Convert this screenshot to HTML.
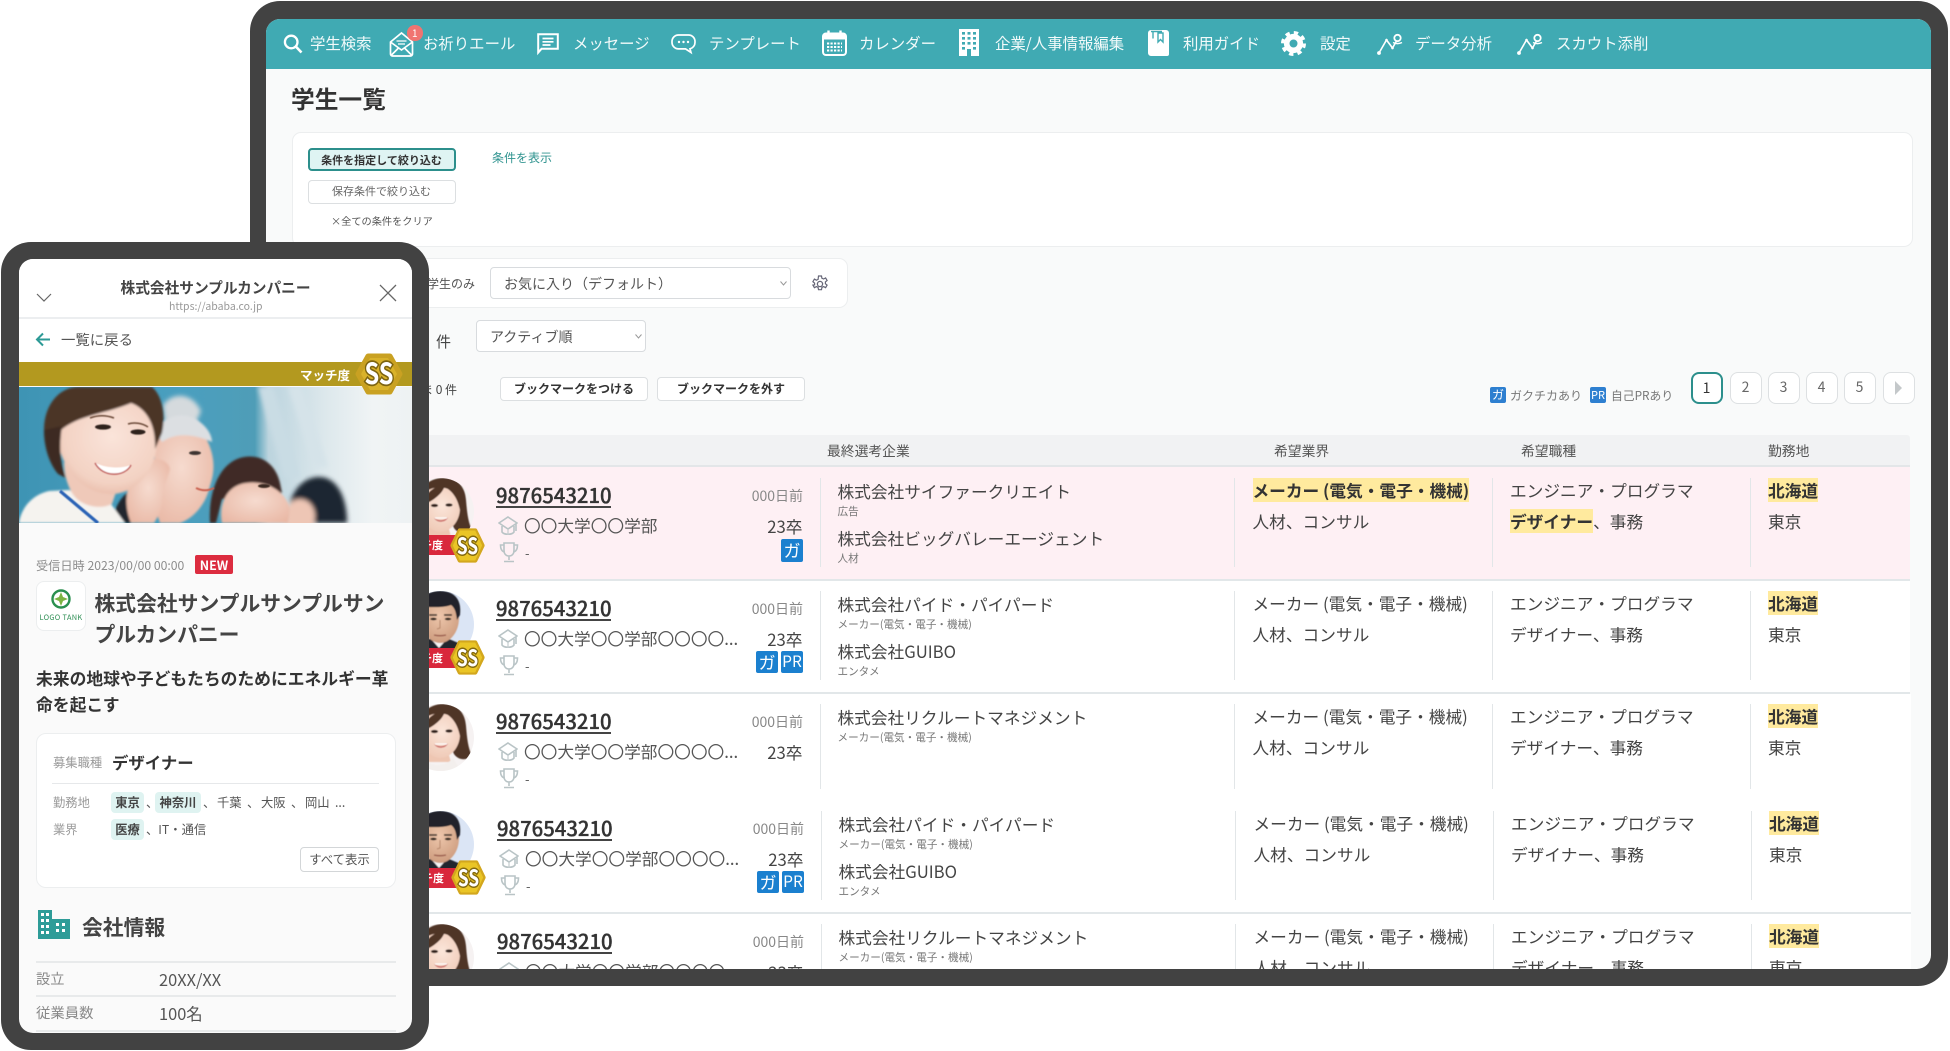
<!DOCTYPE html>
<html lang="ja">
<head>
<meta charset="utf-8">
<title>学生一覧</title>
<style>
*{box-sizing:border-box;margin:0;padding:0}
html,body{width:1950px;height:1051px;background:#fff;overflow:hidden}
body{position:relative;font-family:"Noto Sans CJK JP","Liberation Sans",sans-serif;color:#444}
.a{position:absolute}
.t{position:absolute;white-space:nowrap;line-height:20px;height:20px}
svg{position:absolute;overflow:visible}
.frame{position:absolute;left:250px;top:1px;width:1698px;height:985px;background:#424242;border-radius:30px}
.screen{position:absolute;left:0;top:0;width:1950px;height:1051px;background:#f9fafa;clip-path:inset(19px 19px 82px 266px round 14px)}
.nav{position:absolute;left:266px;top:19px;width:1665px;height:50px;background:#40aab3}
.n{position:absolute;top:33px;color:#f2fafa;font-size:15.4px;line-height:20px;white-space:nowrap;font-weight:400}
.card{position:absolute;background:#fff;border:1.5px solid #eceeef;border-radius:9px}
.btn{position:absolute;border-radius:4px;background:#fff;border:1.5px solid #dcdfe1;text-align:center;white-space:nowrap}
.sel{position:absolute;background:#fff;border:1.5px solid #d8dbde;border-radius:4px;font-size:14px;line-height:33px;padding-left:13px;color:#555;white-space:nowrap}
.pg{position:absolute;top:372px;width:32px;height:32px;border:1.5px solid #dde0e2;border-radius:8px;text-align:center;line-height:28px;font-size:14px;color:#666;background:#fff}
.bd{position:absolute;background:#1b80cf;color:#fff;border-radius:2px;text-align:center;overflow:hidden}
.r{position:absolute;left:0;width:1950px;height:0}
.num{position:absolute;left:496px;top:6px;font-size:20.3px;line-height:20px;color:#333;font-weight:500;-webkit-text-stroke:.35px #333;white-space:nowrap}
.ul{position:absolute;left:496px;top:28px;width:115px;height:1.5px;background:#444}
.days{position:absolute;left:740px;width:63px;top:7.5px;text-align:right;font-size:14px;line-height:20px;color:#888}
.sch{position:absolute;left:524px;top:37px;font-size:16.7px;line-height:20px;color:#555;white-space:nowrap}
.yr{position:absolute;left:749.5px;width:53px;top:37.5px;text-align:right;font-size:16.7px;line-height:20px;color:#444}
.dash{position:absolute;left:525px;top:65px;font-size:13px;line-height:20px;color:#555}
.v{position:absolute;top:0;width:1px;height:89px;background:#e2e6e8}
.co{position:absolute;left:837.5px;font-size:16.7px;line-height:20px;color:#444;white-space:nowrap}
.sub{position:absolute;left:837.5px;font-size:10.6px;line-height:14px;color:#777;white-space:nowrap}
.c1{position:absolute;left:1252.5px;font-size:16.7px;line-height:20px;white-space:nowrap;color:#444}
.c2{position:absolute;left:1510px;font-size:16.7px;line-height:20px;white-space:nowrap;color:#444}
.c3{position:absolute;left:1768px;font-size:16.7px;line-height:20px;white-space:nowrap;color:#444}
.l1{top:2px}.l2{top:33px}
.hl{background:#ffea9e;font-weight:700;color:#333}
.mt{position:absolute;left:410px;width:46px;top:57px;height:20px;background:#d9283c;color:#fff;font-size:11px;line-height:20px;font-weight:700;white-space:nowrap;overflow:hidden;text-indent:-11px}
.ss{position:absolute;left:450px;width:35px;height:35px}
.phone{position:absolute;left:1px;top:242px;width:428px;height:808px;background:#424242;border-radius:30px}
.pscreen{position:absolute;left:0;top:0;width:1950px;height:1051px;background:#fafafa;clip-path:inset(259px 1538px 18px 19px round 14px)}
.ph{font-size:12.3px;color:#9a9a9a}
.pv{font-size:12.3px;color:#555}
.pill{position:absolute;height:21px;background:#dff3f1;border-radius:4px;font-size:12.3px;font-weight:700;line-height:21px;text-align:center;color:#444}
.hr{position:absolute;left:36px;width:360px;height:1.5px;background:#e8eaeb}
</style>
</head>
<body>
<svg width="0" height="0" style="position:absolute">
<defs>
<filter id="av" x="-5%" y="-5%" width="110%" height="110%"><feGaussianBlur stdDeviation=".55"/></filter>
<radialGradient id="skw" cx=".55" cy=".4" r=".7"><stop offset="0" stop-color="#fbe6da"/><stop offset="1" stop-color="#eec6b2"/></radialGradient>
<radialGradient id="skm" cx=".5" cy=".4" r=".7"><stop offset="0" stop-color="#edc6ab"/><stop offset="1" stop-color="#c99678"/></radialGradient>
<symbol id="woman" viewBox="0 0 67 67">
<clipPath id="cw"><circle cx="33.5" cy="33.5" r="33.5"/></clipPath>
<g clip-path="url(#cw)">
<rect width="67" height="67" fill="#f6f2f2"/>
<g filter="url(#av)">
<path d="M12 28C10 8 24 0 36 0c14 0 22 8 23 22 1 12 2 22 6 30-6 5-14 4-18-2l-8-16z" fill="#4f3528"/>
<path d="M22 48l-2 10h24l-3-10z" fill="#eec6b2"/>
<path d="M10 67l8-12c4 4 6 6 12 6 6 0 12-2 16-7l8 13z" fill="#f3efed"/>
<path d="M14 26C14 12 26 8 38 10c10 2 15 10 15 20 0 14-10 24-20 24S14 42 14 26z" fill="url(#skw)"/>
<path d="M14 28C18 15 28 7 38 7c-2 8-10 15-24 21z" fill="#4f3528"/>
<path d="M36 8c8 4 14 10 17 24l4-8C55 12 46 6 36 8z" fill="#4f3528"/>
<ellipse cx="27.5" cy="27.5" rx="3.6" ry="1.6" fill="#33241d"/><ellipse cx="42" cy="27" rx="3.6" ry="1.6" fill="#33241d"/>
<path d="M27 40c4 3 10 3 14-.5-2 5-11 6-14 .5z" fill="#c9615e"/>
<path d="M28 40h12" stroke="#fff" stroke-width="1.2"/>
</g>
</g>
</symbol>
<symbol id="man" viewBox="0 0 67 67">
<clipPath id="cm"><circle cx="33.5" cy="33.5" r="33.5"/></clipPath>
<g clip-path="url(#cm)">
<rect width="67" height="67" fill="#dbe5f5"/>
<g filter="url(#av)">
<path d="M8 67V54l14-6h20l14 6v13z" fill="#23262f"/>
<path d="M24 48l8 9 8-9z" fill="#f5f5f5"/>
<path d="M13 26C13 12 22 7 33 7s19 6 19 20c0 14-9 25-19 25S13 40 13 26z" fill="url(#skm)"/>
<path d="M12 22C10 6 22 0 33 0c14 0 22 8 20 24l-3 5c-1-8-2-12-6-15-8 3-20 2-28 2-2 2-3 4-4 6z" fill="#23242b"/>
<path d="M22 24h8M37 24h8" stroke="#2a221c" stroke-width="1.6"/>
<ellipse cx="26.5" cy="28" rx="3.2" ry="1.3" fill="#231a14"/><ellipse cx="41" cy="28" rx="3.2" ry="1.3" fill="#231a14"/>
<path d="M33 29v8l-3 1" fill="none" stroke="#b5866a" stroke-width="1"/>
<path d="M27 44c4 1 8 1 12 0" fill="none" stroke="#9a5c4c" stroke-width="1.4"/>
</g>
</g>
</symbol>
<symbol id="hex" viewBox="0 0 48 42">
<polygon points="3,21 13,3 35,3 45,21 35,39 13,39" fill="#d3a71d" stroke="#d3a71d" stroke-width="5" stroke-linejoin="round"/>
<polygon points="5,21 14,4 34,4 43,21 34,38 14,38" fill="#eac526" stroke="#eac526" stroke-width="2" stroke-linejoin="round"/>
</symbol>
<symbol id="grad" viewBox="0 0 20 24">
<path d="M10 2l9 6-9 6-9-6z M4 11v6c2 3 10 3 12 0v-6M18 9v7" fill="none" stroke="#b9c4c6" stroke-width="1.6"/>
<path d="M10 14v6" stroke="#c5cdcf" stroke-width="1.2"/>
</symbol>
<symbol id="trophy" viewBox="0 0 20 22">
<path d="M5 2h10v7c0 4-2 6-5 6s-5-2-5-6z M5 4H1.5c0 4 1 6 3.5 7M15 4h3.5c0 4-1 6-3.5 7M10 15v4M5 20.5h10" fill="none" stroke="#b9c4c6" stroke-width="1.6"/>
</symbol>
<symbol id="chart" viewBox="0 0 26 22">
<path d="M2 20L9.5 7l6 8 4-7" fill="none" stroke="#fff" stroke-width="1.6"/>
<circle cx="2" cy="20" r="1.9" fill="#fff"/><circle cx="9.5" cy="7" r="1.3" fill="#fff"/><circle cx="15.5" cy="15" r="1.3" fill="#fff"/>
<circle cx="20.5" cy="5" r="3.2" fill="none" stroke="#fff" stroke-width="1.8"/><path d="M16 9.5c3 1.5 6 1.5 9 0" fill="none" stroke="#fff" stroke-width="1.5"/>
</symbol>
</defs>
</svg>

<div class="frame"></div>
<div class="screen">
  <div class="nav"></div>
  <!-- nav icons -->
  <svg style="left:283px;top:34px" width="20" height="19" viewBox="0 0 20 19"><circle cx="8.2" cy="8" r="6.3" fill="none" stroke="#fff" stroke-width="2.3"/><path d="M12.8 12.5l5.7 6" stroke="#fff" stroke-width="2.6"/></svg>
  <div class="n" style="left:310px">学生検索</div>
  <svg style="left:389px;top:32px" width="25" height="25" viewBox="0 0 25 25"><path d="M1.5 10L12.5 1l11 9v12a2 2 0 0 1-2 2h-18a2 2 0 0 1-2-2z M1.5 10l11 8 11-8 M2 23.5l8-8M23 23.5l-8-8" fill="none" stroke="#fff" stroke-width="1.7"/><path d="M7.5 9h10M9 12h7" stroke="#fff" stroke-width="1.3"/></svg>
  <div class="a" style="left:407px;top:25px;width:15.5px;height:15.5px;border-radius:50%;background:#f07471;color:#fff;font-size:10px;line-height:15.5px;text-align:center">1</div>
  <div class="n" style="left:423px">お祈りエール</div>
  <svg style="left:537px;top:33px" width="22" height="21" viewBox="0 0 22 21"><path d="M1.2 1.2h19.6v14.6H4.5L1.2 19.6z" fill="none" stroke="#fff" stroke-width="2"/><path d="M5.5 5.5h11M5.5 8.8h11M5.5 12h8" stroke="#fff" stroke-width="1.7"/></svg>
  <div class="n" style="left:573px">メッセージ</div>
  <svg style="left:671px;top:34px" width="25" height="19" viewBox="0 0 25 19"><path d="M7.5 1h10a6.5 6.5 0 0 1 6.5 6.5v1a6.5 6.5 0 0 1-5 6.3l1 3.7-5.5-3.6H7.5A6.5 6.5 0 0 1 1 8.5v-1A6.5 6.5 0 0 1 7.5 1z" fill="none" stroke="#fff" stroke-width="1.7"/><circle cx="8" cy="8" r="1.2" fill="#fff"/><circle cx="12.5" cy="8" r="1.2" fill="#fff"/><circle cx="17" cy="8" r="1.2" fill="#fff"/></svg>
  <div class="n" style="left:709px">テンプレート</div>
  <svg style="left:822px;top:30px" width="25" height="26" viewBox="0 0 25 26"><rect x="1" y="3.5" width="23" height="21.5" rx="3" fill="none" stroke="#fff" stroke-width="2"/><path d="M1.5 4.5h22v5h-22z" fill="#fff"/><path d="M6.5 .5v5M18.5 .5v5" stroke="#fff" stroke-width="2.4"/><path d="M5 13.5h15M5 17h15M5 20.5h15" stroke="#fff" stroke-width="1.9" stroke-dasharray="2.2 1.3"/></svg>
  <div class="n" style="left:859px">カレンダー</div>
  <svg style="left:959px;top:29px" width="20" height="27" viewBox="0 0 20 27"><rect width="20" height="27" fill="#fff"/><g fill="#40aab3"><path d="M3 3h3v2.6H3zM8.5 3h3v2.6h-3zM14 3h3v2.6h-3zM3 8h3v2.6H3zM8.5 8h3v2.6h-3zM14 8h3v2.6h-3zM3 13h3v2.6H3zM8.5 13h3v2.6h-3zM14 13h3v2.6h-3zM3 18h3v2.6H3zM14 18h3v2.6h-3zM8 20h4v7H8z"/></g></svg>
  <div class="n" style="left:995px">企業/人事情報編集</div>
  <svg style="left:1148px;top:30px" width="21" height="26" viewBox="0 0 21 26"><path d="M3 0h15a3 3 0 0 1 3 3v21a2 2 0 0 1-2 2H3a3 3 0 0 1-3-3V3a3 3 0 0 1 3-3z" fill="#fff"/><path d="M3 1.5h11M5 1.5v7M10 3h5v9l-2.5-2.5L10 12z" fill="none" stroke="#40aab3" stroke-width="1.4"/></svg>
  <div class="n" style="left:1183px">利用ガイド</div>
  <svg style="left:1281px;top:30.5px" width="25" height="25" viewBox="0 0 25 25"><circle cx="12.5" cy="12.5" r="6.8" fill="none" stroke="#fff" stroke-width="5.6"/><circle cx="12.5" cy="12.5" r="10.7" fill="none" stroke="#fff" stroke-width="3.6" stroke-dasharray="4.3 4.1"/></svg>
  <div class="n" style="left:1320px">設定</div>
  <svg style="left:1377px;top:32.5px" width="26" height="22"><use href="#chart"/></svg>
  <div class="n" style="left:1415px">データ分析</div>
  <svg style="left:1517px;top:32.5px" width="26" height="22"><use href="#chart"/></svg>
  <div class="n" style="left:1556px">スカウト添削</div>

  <div class="t" style="left:291px;top:83px;height:30px;line-height:30px;font-size:23.7px;font-weight:700;color:#333">学生一覧</div>

  <div class="card" style="left:292px;top:132px;width:1621px;height:115px"></div>
  <div class="btn" style="left:307.5px;top:148px;width:148px;height:23px;background:#dff4f3;border:2px solid #2c8f8c;font-size:11px;font-weight:700;line-height:20px;color:#333">条件を指定して絞り込む</div>
  <div class="btn" style="left:307.5px;top:180px;width:148px;height:24px;font-size:11px;line-height:21px;color:#666">保存条件で絞り込む</div>
  <div class="t" style="left:331px;top:211px;font-size:10.2px;color:#555">×全ての条件をクリア</div>
  <div class="t" style="left:492px;top:148px;font-size:12px;color:#2f938f">条件を表示</div>

  <div class="card" style="left:400px;top:258px;width:448px;height:50px"></div>
  <div class="t" style="left:427px;top:274px;font-size:12px;color:#555">学生のみ</div>
  <div class="sel" style="left:490px;top:267px;width:301px;height:32px">お気に入り（デフォルト）</div>
  <svg style="left:780px;top:281px" width="7" height="5" viewBox="0 0 7 5"><path d="M.5.5L3.5 4l3-3.5" fill="none" stroke="#999"/></svg>
  <svg style="left:811px;top:275px" width="18" height="18" viewBox="0 0 18 18"><circle cx="9" cy="9" r="2.6" fill="none" stroke="#667" stroke-width="1.3"/><path d="M7.5 1h3l.4 2.2 1.7.8 2-1.1 1.5 2.6-1.7 1.4v1.8l1.7 1.4-1.5 2.6-2-1.1-1.7.8-.4 2.3h-3l-.4-2.3-1.7-.8-2 1.1-1.5-2.6L3.6 9.9V8.1L1.9 6.7l1.5-2.6 2 1.1 1.7-.8z" fill="none" stroke="#667" stroke-width="1.2"/></svg>

  <div class="t" style="left:436px;top:332px;font-size:15px;color:#444">件</div>
  <div class="sel" style="left:476px;top:320px;width:170px;height:32px">アクティブ順</div>
  <svg style="left:635px;top:334px" width="7" height="5" viewBox="0 0 7 5"><path d="M.5.5L3.5 4l3-3.5" fill="none" stroke="#999"/></svg>

  <div class="t" style="left:421px;top:379.5px;font-size:12px;color:#444">ま 0 件</div>
  <div class="btn" style="left:500px;top:377px;width:148px;height:24px;font-size:12px;font-weight:700;line-height:21px;color:#333">ブックマークをつける</div>
  <div class="btn" style="left:657px;top:377px;width:148px;height:24px;font-size:12px;font-weight:700;line-height:21px;color:#333">ブックマークを外す</div>

  <div class="bd" style="left:1490px;top:387px;width:16px;height:16px;background:#2e7fd0;font-size:12px;line-height:16px">ガ</div>
  <div class="t" style="left:1510px;top:386px;font-size:12px;color:#777">ガクチカあり</div>
  <div class="bd" style="left:1590px;top:387px;width:16px;height:16px;background:#2e7fd0;font-size:11px;line-height:16px">PR</div>
  <div class="t" style="left:1611px;top:386px;font-size:11.8px;color:#777">自己PRあり</div>
  <div class="pg" style="left:1690.5px;border:2px solid #2c8f8c;color:#333">1</div>
  <div class="pg" style="left:1729.5px">2</div>
  <div class="pg" style="left:1767.5px">3</div>
  <div class="pg" style="left:1805.5px">4</div>
  <div class="pg" style="left:1843.5px">5</div>
  <div class="pg" style="left:1882.5px"></div>
  <svg style="left:1893.5px;top:381px" width="9" height="14" viewBox="0 0 9 14"><path d="M1 0l7 7-7 7z" fill="#c4c8ca"/></svg>

  <!-- table -->
  <div class="a" style="left:400px;top:435px;width:1510px;height:30px;background:#f1f2f3;border-radius:3px 3px 0 0"></div>
  <div class="a" style="left:400px;top:465px;width:1510px;height:2px;background:#e3e6e8"></div>
  <div class="t" style="left:827px;top:439.5px;font-size:13.8px;color:#555">最終選考企業</div>
  <div class="t" style="left:1274px;top:439.5px;font-size:13.8px;color:#555">希望業界</div>
  <div class="t" style="left:1521px;top:439.5px;font-size:13.8px;color:#555">希望職種</div>
  <div class="t" style="left:1768px;top:439.5px;font-size:13.8px;color:#555">勤務地</div>

  <div class="a" style="left:400px;top:467px;width:1510px;height:112px;background:#fef0f4"></div>
  <div class="a" style="left:400px;top:579px;width:1510px;height:2px;background:#e2e7e9"></div>
  <div class="a" style="left:400px;top:581px;width:1510px;height:111px;background:#fff"></div>
  <div class="a" style="left:400px;top:692px;width:1510px;height:2px;background:#e2e7e9"></div>
  <div class="a" style="left:400px;top:694px;width:1511px;height:218px;background:#fff"></div>
  <div class="a" style="left:400px;top:912px;width:1511px;height:2px;background:#e2e7e9"></div>
  <div class="a" style="left:400px;top:914px;width:1511px;height:60px;background:#fff"></div>

  <!-- row 1 -->
  <div class="r" style="top:478px">
    <svg style="left:406.5px;top:0" width="67" height="67"><use href="#woman"/></svg>
    <div class="mt">マッチ度</div>
    <svg class="ss" style="top:50px" viewBox="0 0 48 42" preserveAspectRatio="none"><use href="#hex" width="48" height="42"/><text x="24" y="31" text-anchor="middle" font-family="Noto Sans CJK JP, sans-serif" font-size="27" font-weight="700" fill="#fff" stroke="#83690f" stroke-width="3.6" paint-order="stroke" textLength="29" lengthAdjust="spacingAndGlyphs">SS</text></svg>
    <div class="num">9876543210</div><div class="ul"></div><div class="days">000日前</div>
    <svg style="left:498px;top:37px" width="20" height="24"><use href="#grad"/></svg>
    <div class="sch">〇〇大学〇〇学部</div><div class="yr">23卒</div>
    <svg style="left:499px;top:63px" width="20" height="22"><use href="#trophy"/></svg><div class="dash">-</div>
    <div class="bd" style="left:781px;top:61px;width:22px;height:23px;font-size:17px;line-height:22px">ガ</div>
    <div class="v" style="left:820px"></div><div class="v" style="left:1234px"></div><div class="v" style="left:1492px"></div><div class="v" style="left:1750px"></div>
    <div class="co" style="top:2.5px">株式会社サイファークリエイト</div><div class="sub" style="top:27px">広告</div>
    <div class="co" style="top:50px">株式会社ビッグバレーエージェント</div><div class="sub" style="top:74px">人材</div>
    <div class="c1 l1"><span class="hl">メーカー (電気・電子・機械)</span></div><div class="c1 l2">人材、コンサル</div>
    <div class="c2 l1">エンジニア・プログラマ</div><div class="c2 l2"><span class="hl">デザイナー</span>、事務</div>
    <div class="c3 l1"><span class="hl">北海道</span></div><div class="c3 l2">東京</div>
  </div>

  <!-- row 2 -->
  <div class="r" style="top:591px">
    <svg style="left:406.5px;top:0" width="67" height="67"><use href="#man"/></svg>
    <div class="mt">マッチ度</div>
    <svg class="ss" style="top:49px" viewBox="0 0 48 42" preserveAspectRatio="none"><use href="#hex" width="48" height="42"/><text x="24" y="31" text-anchor="middle" font-family="Noto Sans CJK JP, sans-serif" font-size="27" font-weight="700" fill="#fff" stroke="#83690f" stroke-width="3.6" paint-order="stroke" textLength="29" lengthAdjust="spacingAndGlyphs">SS</text></svg>
    <div class="num">9876543210</div><div class="ul"></div><div class="days">000日前</div>
    <svg style="left:498px;top:37px" width="20" height="24"><use href="#grad"/></svg>
    <div class="sch">〇〇大学〇〇学部〇〇〇〇...</div><div class="yr">23卒</div>
    <svg style="left:499px;top:63px" width="20" height="22"><use href="#trophy"/></svg><div class="dash">-</div>
    <div class="bd" style="left:756px;top:60px;width:22px;height:22px;font-size:17px;line-height:21px">ガ</div>
    <div class="bd" style="left:781px;top:60px;width:22px;height:22px;font-size:15.5px;line-height:21px">PR</div>
    <div class="v" style="left:820px"></div><div class="v" style="left:1234px"></div><div class="v" style="left:1492px"></div><div class="v" style="left:1750px"></div>
    <div class="co" style="top:2.5px">株式会社パイド・パイパード</div><div class="sub" style="top:27px">メーカー(電気・電子・機械)</div>
    <div class="co" style="top:50px">株式会社GUIBO</div><div class="sub" style="top:74px">エンタメ</div>
    <div class="c1 l1">メーカー (電気・電子・機械)</div><div class="c1 l2">人材、コンサル</div>
    <div class="c2 l1">エンジニア・プログラマ</div><div class="c2 l2">デザイナー、事務</div>
    <div class="c3 l1"><span class="hl">北海道</span></div><div class="c3 l2">東京</div>
  </div>

  <!-- row 3 -->
  <div class="r" style="top:704px">
    <svg style="left:406.5px;top:0" width="67" height="67"><use href="#woman"/></svg>
    <div class="num">9876543210</div><div class="ul"></div><div class="days">000日前</div>
    <svg style="left:498px;top:37px" width="20" height="24"><use href="#grad"/></svg>
    <div class="sch">〇〇大学〇〇学部〇〇〇〇...</div><div class="yr">23卒</div>
    <svg style="left:499px;top:63px" width="20" height="22"><use href="#trophy"/></svg><div class="dash">-</div>
    <div class="v" style="left:820px;height:85px"></div><div class="v" style="left:1234px;height:85px"></div><div class="v" style="left:1492px;height:85px"></div><div class="v" style="left:1750px;height:85px"></div>
    <div class="co" style="top:2.5px">株式会社リクルートマネジメント</div><div class="sub" style="top:27px">メーカー(電気・電子・機械)</div>
    <div class="c1 l1">メーカー (電気・電子・機械)</div><div class="c1 l2">人材、コンサル</div>
    <div class="c2 l1">エンジニア・プログラマ</div><div class="c2 l2">デザイナー、事務</div>
    <div class="c3 l1"><span class="hl">北海道</span></div><div class="c3 l2">東京</div>
  </div>

  <!-- row 4 -->
  <div class="r" style="top:811px;left:1px">
    <svg style="left:405.5px;top:0" width="67" height="67"><use href="#man"/></svg>
    <div class="mt">マッチ度</div>
    <svg class="ss" style="top:49px" viewBox="0 0 48 42" preserveAspectRatio="none"><use href="#hex" width="48" height="42"/><text x="24" y="31" text-anchor="middle" font-family="Noto Sans CJK JP, sans-serif" font-size="27" font-weight="700" fill="#fff" stroke="#83690f" stroke-width="3.6" paint-order="stroke" textLength="29" lengthAdjust="spacingAndGlyphs">SS</text></svg>
    <div class="num">9876543210</div><div class="ul"></div><div class="days">000日前</div>
    <svg style="left:498px;top:37px" width="20" height="24"><use href="#grad"/></svg>
    <div class="sch">〇〇大学〇〇学部〇〇〇〇...</div><div class="yr">23卒</div>
    <svg style="left:499px;top:63px" width="20" height="22"><use href="#trophy"/></svg><div class="dash">-</div>
    <div class="bd" style="left:756px;top:60px;width:22px;height:22px;font-size:17px;line-height:21px">ガ</div>
    <div class="bd" style="left:781px;top:60px;width:22px;height:22px;font-size:15.5px;line-height:21px">PR</div>
    <div class="v" style="left:820px"></div><div class="v" style="left:1234px"></div><div class="v" style="left:1492px"></div><div class="v" style="left:1750px"></div>
    <div class="co" style="top:2.5px">株式会社パイド・パイパード</div><div class="sub" style="top:27px">メーカー(電気・電子・機械)</div>
    <div class="co" style="top:50px">株式会社GUIBO</div><div class="sub" style="top:74px">エンタメ</div>
    <div class="c1 l1">メーカー (電気・電子・機械)</div><div class="c1 l2">人材、コンサル</div>
    <div class="c2 l1">エンジニア・プログラマ</div><div class="c2 l2">デザイナー、事務</div>
    <div class="c3 l1"><span class="hl">北海道</span></div><div class="c3 l2">東京</div>
  </div>

  <!-- row 5 -->
  <div class="r" style="top:924px;left:1px">
    <svg style="left:405.5px;top:0" width="67" height="67"><use href="#woman"/></svg>
    <div class="num">9876543210</div><div class="ul"></div><div class="days">000日前</div>
    <svg style="left:498px;top:37px" width="20" height="24"><use href="#grad"/></svg>
    <div class="sch">〇〇大学〇〇学部〇〇〇〇...</div><div class="yr">23卒</div>
    <div class="v" style="left:820px;height:60px"></div><div class="v" style="left:1234px;height:60px"></div><div class="v" style="left:1492px;height:60px"></div><div class="v" style="left:1750px;height:60px"></div>
    <div class="co" style="top:2.5px">株式会社リクルートマネジメント</div><div class="sub" style="top:27px">メーカー(電気・電子・機械)</div>
    <div class="c1 l1">メーカー (電気・電子・機械)</div><div class="c1 l2">人材、コンサル</div>
    <div class="c2 l1">エンジニア・プログラマ</div><div class="c2 l2">デザイナー、事務</div>
    <div class="c3 l1"><span class="hl">北海道</span></div><div class="c3 l2">東京</div>
  </div>
</div>

<!-- phone -->
<div class="phone"></div>
<div class="pscreen">
  <div class="a" style="left:19px;top:259px;width:393px;height:103px;background:#fff"></div>
  <div class="t" style="left:120.5px;top:278px;font-size:14.7px;font-weight:700;color:#444">株式会社サンプルカンパニー</div>
  <div class="t" style="left:169px;top:297px;font-size:10.5px;color:#999">https://ababa.co.jp</div>
  <svg style="left:36px;top:293px" width="16" height="10" viewBox="0 0 16 10"><path d="M1 1l7 7 7-7" fill="none" stroke="#666" stroke-width="1.2"/></svg>
  <svg style="left:379px;top:284px" width="18" height="18" viewBox="0 0 18 18"><path d="M1 1l16 16M17 1L1 17" stroke="#666" stroke-width="1.3"/></svg>
  <div class="a" style="left:19px;top:317px;width:393px;height:2px;background:#eceef0"></div>
  <svg style="left:35px;top:332px" width="16" height="15" viewBox="0 0 16 15"><path d="M15 7.5H2M8 1.5l-6 6 6 6" fill="none" stroke="#2d9a96" stroke-width="2"/></svg>
  <div class="t" style="left:61px;top:330px;font-size:14.4px;color:#555">一覧に戻る</div>

  <!-- hero -->
  <svg style="left:19px;top:387px" width="393" height="136" viewBox="19 387 393 136">
    <defs>
      <clipPath id="hc"><rect x="19" y="387" width="393" height="136"/></clipPath>
      <linearGradient id="hb" x1="0" x2="1" y1="0" y2="0"><stop offset="0" stop-color="#3e94b4"/><stop offset=".42" stop-color="#4a9fbf"/><stop offset=".6" stop-color="#4f9db7"/><stop offset=".635" stop-color="#bcd4de"/><stop offset=".78" stop-color="#dde8ec"/><stop offset=".9" stop-color="#f0f4f5"/><stop offset="1" stop-color="#eef2f3"/></linearGradient>
      <radialGradient id="sk1" cx=".55" cy=".4" r=".7"><stop offset="0" stop-color="#fae4da"/><stop offset=".7" stop-color="#f3d2c3"/><stop offset="1" stop-color="#e4b19d"/></radialGradient>
      <radialGradient id="sk2" cx=".5" cy=".45" r=".65"><stop offset="0" stop-color="#f6dbcf"/><stop offset="1" stop-color="#e9b8a5"/></radialGradient>
      <filter id="bl" x="-5%" y="-5%" width="110%" height="110%"><feGaussianBlur stdDeviation="1"/></filter>
      <filter id="bl2" x="-20%" y="-20%" width="140%" height="140%"><feGaussianBlur stdDeviation="2.4"/></filter>
      <filter id="bl3" x="-30%" y="-30%" width="160%" height="160%"><feGaussianBlur stdDeviation=".6"/></filter>
    </defs>
    <g clip-path="url(#hc)">
    <rect x="19" y="387" width="393" height="136" fill="url(#hb)"/>
    <g filter="url(#bl2)">
      <path d="M258 387h16l26 90h-16z" fill="#c9dce4"/><path d="M288 387h14l26 80h-14z" fill="#d5e3e9"/>
      <path d="M287 523c0-28 14-46 32-46s28 20 28 46z" fill="#1c2830"/>
      <ellipse cx="300" cy="516" rx="15" ry="17" fill="#eec6b5"/>
      <path d="M163 405c10-14 30-12 38 6l-6 14-30 0z" fill="#d5dadd"/>
    </g>
    <g filter="url(#bl)">
      <path d="M210 523c-2-32 10-62 34-66 18-3 32 8 36 26l2 10-60 6-6 24z" fill="#3f2c25"/>
      <path d="M222 523c-4-20 6-38 24-40 20-3 40 8 44 26l-2 14z" fill="url(#sk2)"/>
      <path d="M158 432c10-14 36-14 48 6 8 16 10 30 4 48-4 18-16 32-30 37h-20l-10-30z" fill="url(#sk2)"/>
      <path d="M156 432c6-14 26-24 44-10 8 6 12 14 12 20-18-8-36-10-50 0z" fill="#dcdfe2"/>
      <path d="M113 523c0-12 6-24 14-30l14 4 6 26z" fill="#23262d"/>
      <path d="M131 523c-6-14-6-30 0-44 4-10 14-20 24-20 8 0 14 4 15 10-2 10-8 20-8 32 0 8-4 16-8 22z" fill="url(#sk2)"/>
      <path d="M19 523c2-14 12-28 30-32l20-1 20 8 22 6 14 19z" fill="#f5f3ef"/>
      <path d="M64 462c0 16 6 30 12 36 8 8 24 12 36 6l8-24z" fill="#efc9b9"/>
      <ellipse cx="58" cy="437" rx="8" ry="14" fill="#efc6b6"/>
      <path d="M57 430c3-18 22-32 50-32 30 0 52 14 50 46-2 28-22 50-46 50-30 0-54-30-54-64z" fill="url(#sk1)"/>
      <path d="M44 430c0-26 16-43 34-43h74c10 8 14 28 10 46l-7 16c1-24-8-40-24-46-22 10-54 12-71 28-3 14-2 34 4 46-12-6-20-26-20-47z" fill="#4b3426"/>
      <path d="M44 430c0 14 4 32 14 44l8 4c-6-14-7-32-4-52z" fill="#3d2a20"/>
    </g>
    <g filter="url(#bl3)">
    <ellipse cx="103" cy="427" rx="8" ry="2.6" fill="#2e211b"/>
    <ellipse cx="138" cy="432" rx="7.5" ry="2.6" fill="#2e211b"/>
    <path d="M90 418c8-3 16-3 24 0M128 424c6-2 14-1 20 3" fill="none" stroke="#6b4a38" stroke-width="1.5"/>
    <path d="M95 463c12 5 24 6 36 2-4 11-28 12-36-2z" fill="#fff"/>
    <path d="M95 463c8 15 30 14 36 2" fill="none" stroke="#c1615f" stroke-width="1.4"/>
    <path d="M60 491l38 32" stroke="#2a62b5" stroke-width="3.2"/>
    <ellipse cx="195" cy="453" rx="6" ry="2" fill="#3c3430"/>
    <path d="M196 488c6 3 12 3 18 0" stroke="#c9614f" stroke-width="2" fill="none"/>
    <ellipse cx="264" cy="486" rx="6" ry="2" fill="#3a2a22"/>
    </g>
    </g>
  </svg>

  <div class="a" style="left:19px;top:362px;width:393px;height:24px;background:#b3991f"></div>
  <div class="t" style="left:300px;top:365px;font-size:12.5px;font-weight:700;color:#fff">マッチ度</div>
  <svg style="left:355px;top:353px" width="48" height="42" viewBox="0 0 48 42"><polygon points="3,21 13,3 35,3 45,21 35,39 13,39" fill="#c9a122" stroke="#c9a122" stroke-width="5" stroke-linejoin="round"/><polygon points="6,21 15,5 33,5 42,21 33,37 15,37" fill="#d9b22a"/><text x="24" y="31" text-anchor="middle" font-family="Noto Sans CJK JP, sans-serif" font-size="29" font-weight="700" fill="#fff" stroke="#7d6410" stroke-width="3.4" paint-order="stroke" textLength="29" lengthAdjust="spacingAndGlyphs">SS</text></svg>

  <!-- body -->
  <div class="t" style="left:36px;top:555px;font-size:12.2px;color:#8c8c8c">受信日時 2023/00/00 00:00</div>
  <div class="a" style="left:195px;top:555px;width:38px;height:19px;background:#dc2c3f;border-radius:2px;color:#fff;font-size:12.5px;font-weight:700;line-height:19px;text-align:center">NEW</div>
  <div class="a" style="left:36px;top:581px;width:50px;height:50px;background:#fff;border:1.5px solid #eceeef;border-radius:8px"></div>
  <svg style="left:49px;top:588px" width="24" height="24" viewBox="0 0 24 24"><circle cx="12" cy="11" r="8.5" fill="none" stroke="#2a8f4f" stroke-width="2.4"/><path d="M12 4l2 5 5 2-5 2-2 5-2-5-5-2 5-2z" fill="#7cb342"/></svg>
  <div class="t" style="left:38px;top:608px;width:46px;text-align:center;font-size:7.4px;color:#2f8f55;letter-spacing:.3px">LOGO TANK</div>
  <div class="t" style="left:94.5px;top:592px;font-size:20.8px;font-weight:700;color:#444">株式会社サンプルサンプルサン</div>
  <div class="t" style="left:94.5px;top:623px;font-size:20.8px;font-weight:700;color:#444">プルカンパニー</div>
  <div class="t" style="left:36px;top:668px;font-size:16.8px;font-weight:700;color:#333">未来の地球や子どもたちのためにエネルギー革</div>
  <div class="t" style="left:36px;top:693.5px;font-size:16.8px;font-weight:700;color:#333">命を起こす</div>

  <div class="card" style="left:36px;top:733px;width:360px;height:155px;border-radius:10px"></div>
  <div class="t ph" style="left:53px;top:752px">募集職種</div>
  <div class="t" style="left:112px;top:752px;font-size:16.4px;font-weight:700;color:#333">デザイナー</div>
  <div class="a" style="left:52px;top:783px;width:327px;height:1px;background:#e6e8ea"></div>
  <div class="t ph" style="left:53px;top:792px">勤務地</div>
  <div class="pill" style="left:111px;top:792px;width:33px">東京</div>
  <div class="t pv" style="left:146px;top:792px">、</div>
  <div class="pill" style="left:155px;top:792px;width:46px">神奈川</div>
  <div class="t pv" style="left:203px;top:792px">、</div>
  <div class="t pv" style="left:217px;top:792px">千葉</div>
  <div class="t pv" style="left:247px;top:792px">、</div>
  <div class="t pv" style="left:261px;top:792px">大阪</div>
  <div class="t pv" style="left:291px;top:792px">、</div>
  <div class="t pv" style="left:305px;top:792px">岡山</div>
  <div class="t pv" style="left:335px;top:792px">...</div>
  <div class="t ph" style="left:53px;top:819px">業界</div>
  <div class="pill" style="left:111px;top:819px;width:33px">医療</div>
  <div class="t pv" style="left:146px;top:819px">、IT・通信</div>
  <div class="btn" style="left:300px;top:847px;width:79px;height:25px;font-size:12.4px;line-height:22px;color:#555;border-color:#d3d6d8">すべて表示</div>

  <svg style="left:38px;top:910px" width="32" height="29" viewBox="0 0 32 29"><path d="M0 0h14v9h18v20H0z" fill="#2e9c98"/><g fill="#fff"><path d="M3 3h3v3H3zM8 3h3v3H8zM3 9h3v3H3zM8 9h3v3H8zM3 15h3v3H3zM8 15h3v3H8zM3 21h3v3H3zM8 21h3v3H8zM18 13h3v3h-3zM24 13h3v3h-3zM18 19h3v3h-3zM24 19h3v3h-3z"/></g></svg>
  <div class="t" style="left:82px;top:916px;font-size:20.8px;font-weight:700;color:#444">会社情報</div>
  <div class="hr" style="top:961px"></div>
  <div class="t" style="left:36px;top:969px;font-size:14.2px;color:#888">設立</div>
  <div class="t" style="left:159px;top:968.5px;font-size:16.4px;color:#555">20XX/XX</div>
  <div class="hr" style="top:995px"></div>
  <div class="t" style="left:36px;top:1003px;font-size:14.4px;color:#888">従業員数</div>
  <div class="t" style="left:159px;top:1003px;font-size:16.4px;color:#555">100名</div>
  <div class="hr" style="top:1030px"></div>
</div>
</body>
</html>
